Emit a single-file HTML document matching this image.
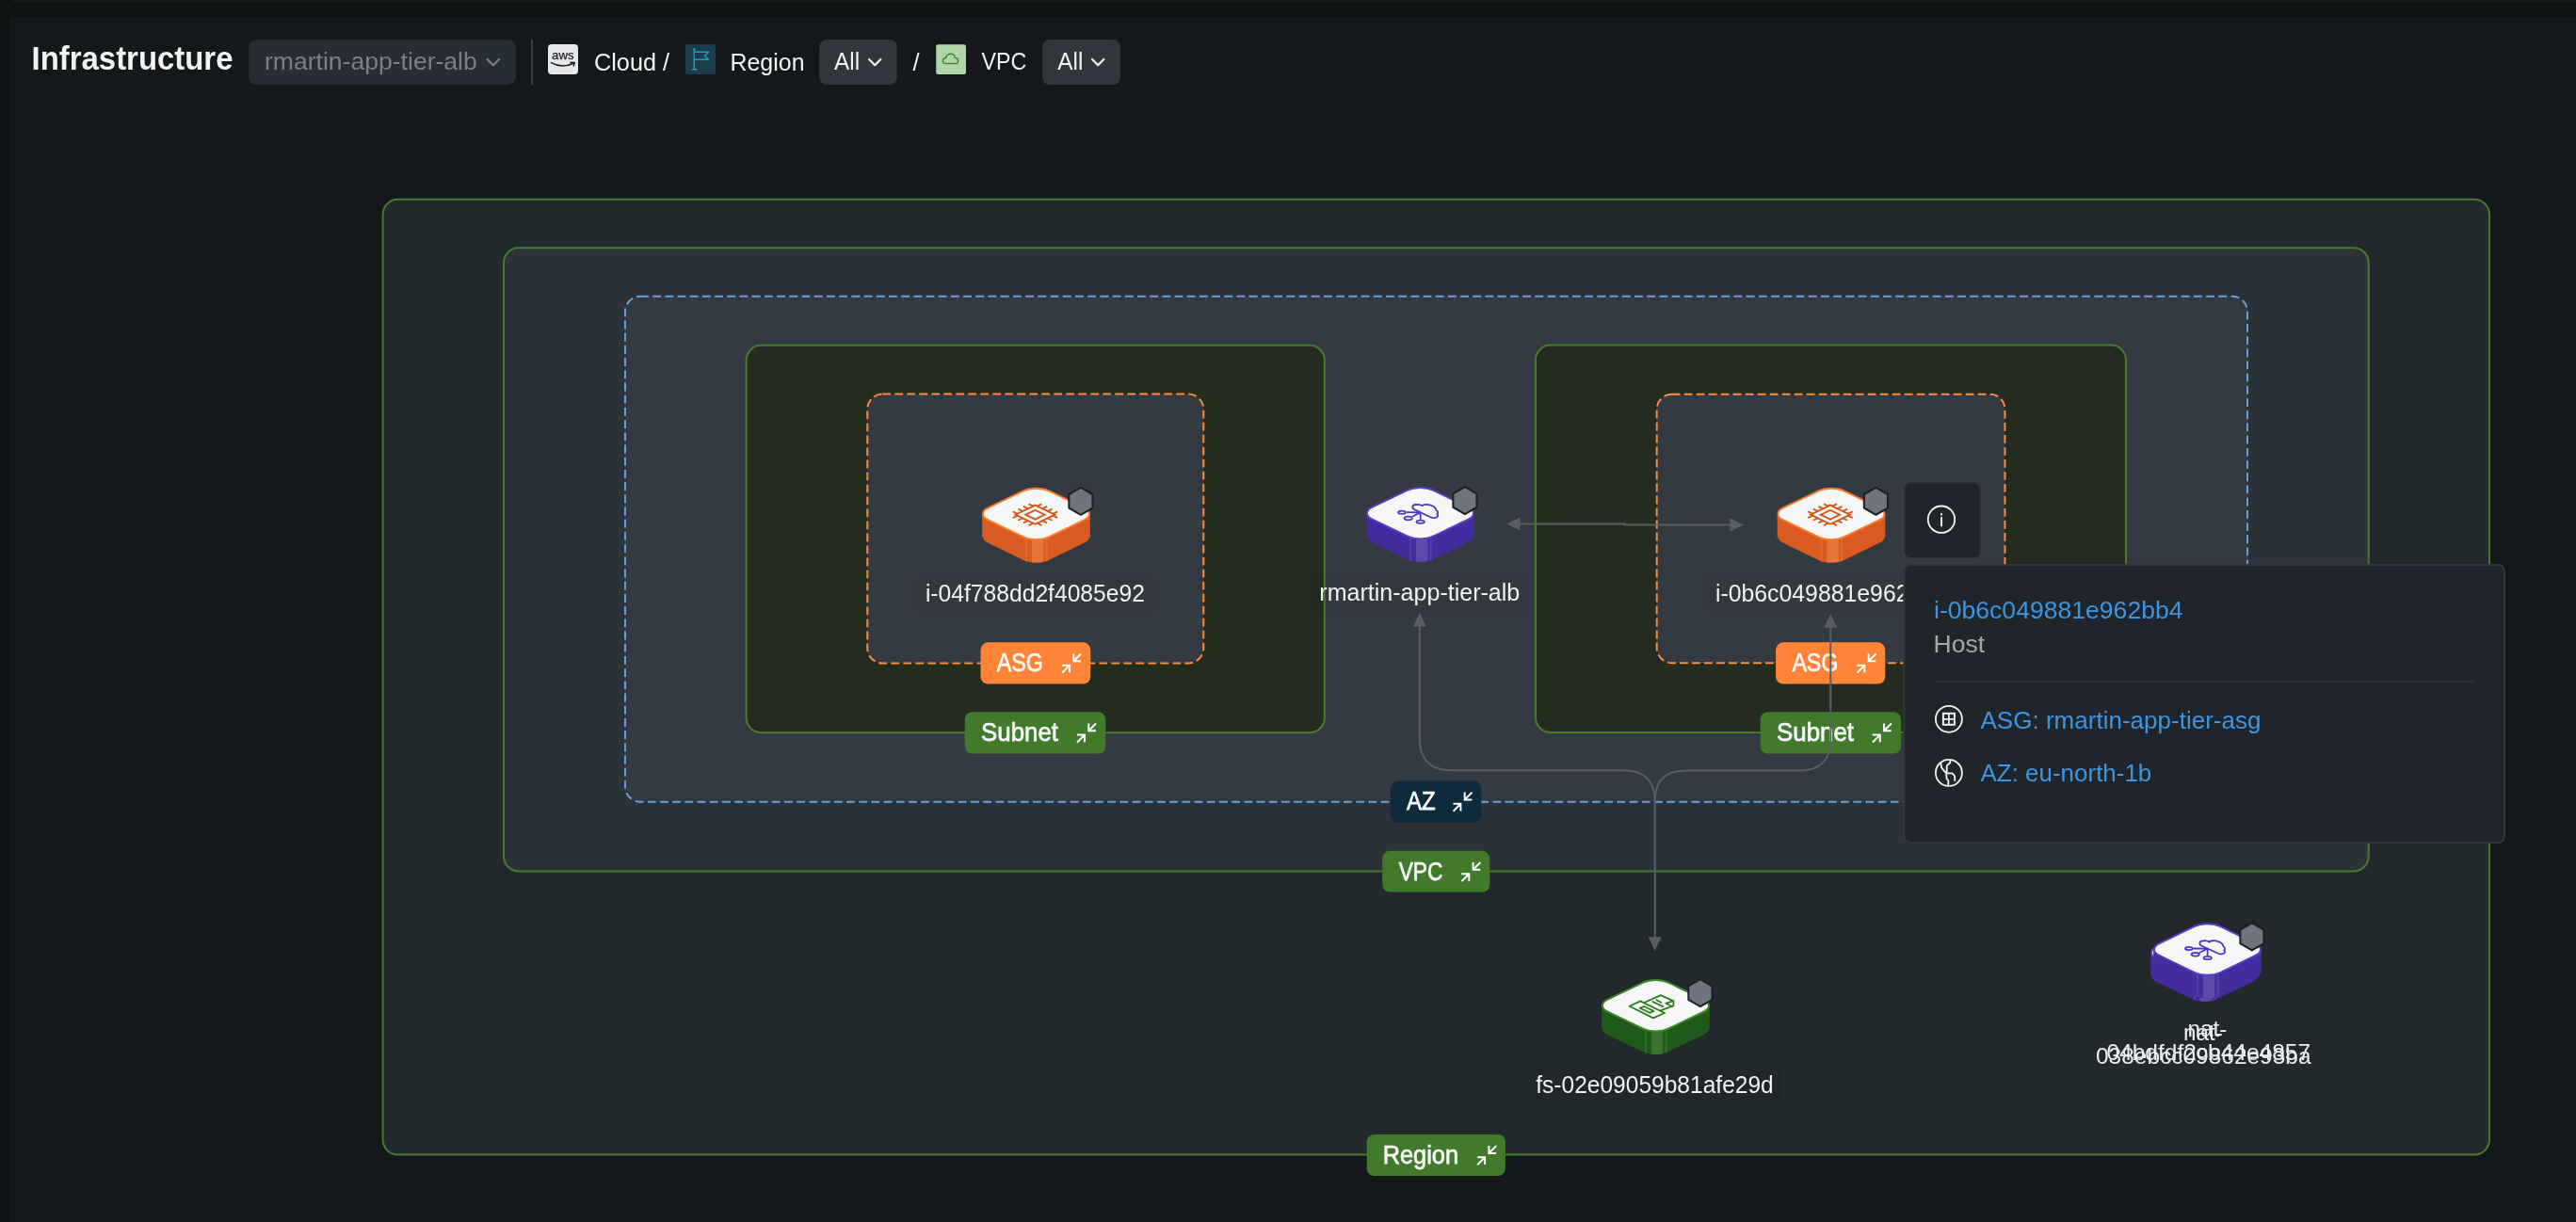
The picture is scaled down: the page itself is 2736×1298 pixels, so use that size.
<!DOCTYPE html><html><head><meta charset="utf-8"><style>html,body{margin:0;padding:0;background:#0f1213;overflow:hidden}svg{display:block;will-change:transform}text{font-family:"Liberation Sans", sans-serif}</style></head><body>
<svg width="2736" height="1298" viewBox="0 0 2736 1298">
<rect x="0" y="0" width="2736" height="1298" fill="#0f1314"/>
<rect x="13" y="0" width="2723" height="2" fill="#151a1d"/>
<rect x="10" y="18" width="2726" height="1280" fill="#14181b"/>
<text x="33.5" y="73.6" font-size="34.5" fill="#f1f2f2" font-weight="bold" text-anchor="start" textLength="214" lengthAdjust="spacingAndGlyphs" >Infrastructure</text>
<rect x="264.2" y="42.2" width="283.7" height="47.5" rx="8" fill="#262d33" stroke="none" stroke-width="0" />
<text x="281" y="73.6" font-size="26" fill="#7a8086" font-weight="normal" text-anchor="start" textLength="225.8" lengthAdjust="spacingAndGlyphs" >rmartin-app-tier-alb</text>
<path d="M517.5,63 L523.8,69.3 L530.1,63" fill="none" stroke="#7a8086" stroke-width="2.2" stroke-linecap="round" stroke-linejoin="round"/>
<rect x="564" y="42" width="2" height="48" fill="#353c42"/>
<rect x="582" y="47" width="32" height="32" rx="4" fill="#e6e8e9" stroke="none" stroke-width="0" />
<text x="597.8" y="63.4" font-size="13.2" fill="#1b1f22" font-weight="normal" text-anchor="middle" textLength="23.4" lengthAdjust="spacingAndGlyphs" stroke="#1b1f22" stroke-width="0.25">aws</text>
<path d="M585.5,66.6 Q597,73 609,67.2" fill="none" stroke="#1b1f22" stroke-width="1.6" stroke-linecap="round"/>
<path d="M606,66.2 L610.4,66.5 L609.2,70" fill="none" stroke="#1b1f22" stroke-width="1.4" stroke-linecap="round" stroke-linejoin="round"/>
<text x="631" y="75" font-size="25.5" fill="#f1f2f2" font-weight="normal" text-anchor="start" textLength="80" lengthAdjust="spacingAndGlyphs" >Cloud /</text>
<rect x="728" y="47" width="32" height="32" fill="#1a3c4b"/>
<path d="M737.3,52.5 L737.3,73.6 M734.8,73.8 L740.3,73.8 M737.3,55.3 L752.8,55.3 L748.3,59.3 L752.8,63.3 L737.3,63.3" fill="none" stroke="#1f9cc4" stroke-width="1.4" stroke-linejoin="round"/>
<circle cx="737.3" cy="52.3" r="1.2" fill="#1f9cc4"/>
<text x="775.5" y="75" font-size="25.5" fill="#f1f2f2" font-weight="normal" text-anchor="start" textLength="79" lengthAdjust="spacingAndGlyphs" >Region</text>
<rect x="870.3" y="42" width="82.5" height="48" rx="8" fill="#30363c" stroke="none" stroke-width="0" />
<text x="886.1" y="74.3" font-size="25" fill="#f1f2f2" font-weight="normal" text-anchor="start" textLength="27.1" lengthAdjust="spacingAndGlyphs" >All</text>
<path d="M923,63 L929.2,69.3 L935.4,63" fill="none" stroke="#f1f2f2" stroke-width="2.2" stroke-linecap="round" stroke-linejoin="round"/>
<text x="969.5" y="75" font-size="25.5" fill="#f1f2f2" font-weight="normal" text-anchor="start" >/</text>
<rect x="994.2" y="47.2" width="31.8" height="31.7" rx="2" fill="#b2d4ab" stroke="none" stroke-width="0" />
<path d="M1004.2,67.6 C1000.5,67.6 1000.5,61.6 1004.6,61.6 C1004.8,57.8 1008.5,56.8 1010.5,57.3 C1013,57.6 1014,59.5 1014.3,61.4 C1018.5,61.2 1018.8,67.6 1014.8,67.6 Z" fill="none" stroke="#3d8b2e" stroke-width="1.5" stroke-linejoin="round"/>
<text x="1042.6" y="74.3" font-size="25" fill="#f1f2f2" font-weight="normal" text-anchor="start" textLength="47.8" lengthAdjust="spacingAndGlyphs" >VPC</text>
<rect x="1107.1" y="42" width="82.9" height="48" rx="8" fill="#30363c" stroke="none" stroke-width="0" />
<text x="1123.3" y="74.3" font-size="25" fill="#f1f2f2" font-weight="normal" text-anchor="start" textLength="27.1" lengthAdjust="spacingAndGlyphs" >All</text>
<path d="M1160,63 L1166.2,69.3 L1172.4,63" fill="none" stroke="#f1f2f2" stroke-width="2.2" stroke-linecap="round" stroke-linejoin="round"/>
<rect x="406.6" y="211.8" width="2237.4" height="1014.8" rx="16" fill="#22292d" stroke="#457c2a" stroke-width="2" />
<rect x="535" y="263.3" width="1980.6999999999998" height="662.2" rx="16" fill="#2b3238" stroke="#457c2a" stroke-width="2" />
<rect x="664" y="314.7" width="1723" height="537.0999999999999" rx="16" fill="#343a41" stroke="#64a0de" stroke-width="2" stroke-dasharray="8.8 4.4"/>
<rect x="792.6" y="366.8" width="614.1999999999999" height="411.40000000000003" rx="16" fill="#232c1f" stroke="#457c2a" stroke-width="2" />
<rect x="1631" y="366.5" width="627" height="411.5" rx="16" fill="#232c1f" stroke="#457c2a" stroke-width="2" />
<rect x="921.3" y="418.6" width="357.0" height="285.9" rx="16" fill="#343a41" stroke="#ff8a3d" stroke-width="2" stroke-dasharray="8.8 4.2"/>
<rect x="1759.7" y="418.7" width="369.79999999999995" height="285.59999999999997" rx="16" fill="#343a41" stroke="#ff8a3d" stroke-width="2" stroke-dasharray="8.8 4.2"/>
<rect x="1041.5" y="682.3" width="116.80000000000004" height="44.300000000000026" rx="8" fill="#ff8438" stroke="none" stroke-width="0" />
<text x="1058.8" y="713.0" font-size="28.5" fill="#f7f7f7" font-weight="normal" text-anchor="start" textLength="49" lengthAdjust="spacingAndGlyphs" stroke="#f7f7f7" stroke-width="0.75">ASG</text>
<path d="M1128.00,706.70 L1136.00,706.70 L1136.00,714.30 M1136.00,706.70 L1128.10,714.60" fill="none" stroke="#fff" stroke-width="2.0" stroke-linecap="butt" stroke-linejoin="miter"/>
<path d="M1140.30,694.50 L1140.30,702.30 L1148.00,702.30 M1140.30,702.30 L1148.10,694.50" fill="none" stroke="#fff" stroke-width="2.0" stroke-linecap="butt" stroke-linejoin="miter"/>
<rect x="1024.7" y="756.1999999999999" width="149.6" height="44.40000000000005" rx="8" fill="#427a2b" stroke="none" stroke-width="0" />
<text x="1042" y="786.9" font-size="28.5" fill="#f7f7f7" font-weight="normal" text-anchor="start" textLength="82" lengthAdjust="spacingAndGlyphs" stroke="#f7f7f7" stroke-width="0.75">Subnet</text>
<path d="M1144.00,780.60 L1152.00,780.60 L1152.00,788.20 M1152.00,780.60 L1144.10,788.50" fill="none" stroke="#fff" stroke-width="2.0" stroke-linecap="butt" stroke-linejoin="miter"/>
<path d="M1156.30,768.40 L1156.30,776.20 L1164.00,776.20 M1156.30,776.20 L1164.10,768.40" fill="none" stroke="#fff" stroke-width="2.0" stroke-linecap="butt" stroke-linejoin="miter"/>
<rect x="1886.1000000000001" y="682.3" width="116.1999999999999" height="44.300000000000026" rx="8" fill="#ff8438" stroke="none" stroke-width="0" />
<text x="1903.4" y="713.0" font-size="28.5" fill="#f7f7f7" font-weight="normal" text-anchor="start" textLength="49" lengthAdjust="spacingAndGlyphs" stroke="#f7f7f7" stroke-width="0.75">ASG</text>
<path d="M1972.40,706.70 L1980.40,706.70 L1980.40,714.30 M1980.40,706.70 L1972.50,714.60" fill="none" stroke="#fff" stroke-width="2.0" stroke-linecap="butt" stroke-linejoin="miter"/>
<path d="M1984.70,694.50 L1984.70,702.30 L1992.40,702.30 M1984.70,702.30 L1992.50,694.50" fill="none" stroke="#fff" stroke-width="2.0" stroke-linecap="butt" stroke-linejoin="miter"/>
<rect x="1869.7" y="756.1999999999999" width="149.39999999999995" height="44.40000000000005" rx="8" fill="#427a2b" stroke="none" stroke-width="0" />
<text x="1887" y="786.9" font-size="28.5" fill="#f7f7f7" font-weight="normal" text-anchor="start" textLength="82" lengthAdjust="spacingAndGlyphs" stroke="#f7f7f7" stroke-width="0.75">Subnet</text>
<path d="M1988.80,780.60 L1996.80,780.60 L1996.80,788.20 M1996.80,780.60 L1988.90,788.50" fill="none" stroke="#fff" stroke-width="2.0" stroke-linecap="butt" stroke-linejoin="miter"/>
<path d="M2001.10,768.40 L2001.10,776.20 L2008.80,776.20 M2001.10,776.20 L2008.90,768.40" fill="none" stroke="#fff" stroke-width="2.0" stroke-linecap="butt" stroke-linejoin="miter"/>
<rect x="1477.1000000000001" y="829.4" width="96.1999999999999" height="44.40000000000005" rx="8" fill="#0e2a3b" stroke="none" stroke-width="0" />
<text x="1494" y="860.1" font-size="28.5" fill="#f7f7f7" font-weight="normal" text-anchor="start" textLength="30.7" lengthAdjust="spacingAndGlyphs" stroke="#f7f7f7" stroke-width="0.75">AZ</text>
<path d="M1543.40,853.80 L1551.40,853.80 L1551.40,861.40 M1551.40,853.80 L1543.50,861.70" fill="none" stroke="#fff" stroke-width="2.0" stroke-linecap="butt" stroke-linejoin="miter"/>
<path d="M1555.70,841.60 L1555.70,849.40 L1563.40,849.40 M1555.70,849.40 L1563.50,841.60" fill="none" stroke="#fff" stroke-width="2.0" stroke-linecap="butt" stroke-linejoin="miter"/>
<rect x="1468.2" y="903.8" width="114.1" height="43.800000000000026" rx="8" fill="#427a2b" stroke="none" stroke-width="0" />
<text x="1485.7" y="934.5" font-size="28.5" fill="#f7f7f7" font-weight="normal" text-anchor="start" textLength="46.8" lengthAdjust="spacingAndGlyphs" stroke="#f7f7f7" stroke-width="0.75">VPC</text>
<path d="M1552.30,928.20 L1560.30,928.20 L1560.30,935.80 M1560.30,928.20 L1552.40,936.10" fill="none" stroke="#fff" stroke-width="2.0" stroke-linecap="butt" stroke-linejoin="miter"/>
<path d="M1564.60,916.00 L1564.60,923.80 L1572.30,923.80 M1564.60,923.80 L1572.40,916.00" fill="none" stroke="#fff" stroke-width="2.0" stroke-linecap="butt" stroke-linejoin="miter"/>
<rect x="1451.7" y="1204.9" width="147.1999999999999" height="44.2" rx="8" fill="#427a2b" stroke="none" stroke-width="0" />
<text x="1468.7" y="1235.6" font-size="28.5" fill="#f7f7f7" font-weight="normal" text-anchor="start" textLength="80.3" lengthAdjust="spacingAndGlyphs" stroke="#f7f7f7" stroke-width="0.75">Region</text>
<path d="M1569.10,1229.30 L1577.10,1229.30 L1577.10,1236.90 M1577.10,1229.30 L1569.20,1237.20" fill="none" stroke="#fff" stroke-width="2.0" stroke-linecap="butt" stroke-linejoin="miter"/>
<path d="M1581.40,1217.10 L1581.40,1224.90 L1589.10,1224.90 M1581.40,1224.90 L1589.20,1217.10" fill="none" stroke="#fff" stroke-width="2.0" stroke-linecap="butt" stroke-linejoin="miter"/>
<path d="M1612,556.6 L1726,556.6 L1726,557.6 L1840,557.6" fill="none" stroke="#585e65" stroke-width="2"/>
<polygon points="1600,556.6 1614.50,549.60 1614.50,563.60" fill="#585e65"/>
<polygon points="1852,557.6 1837.50,564.60 1837.50,550.60" fill="#585e65"/>
<path d="M1507.8,662 L1507.8,784 Q1507.8,818.2 1541.5,818.2 L1724,818.2 Q1757.7,818.2 1757.7,851 L1757.7,998" fill="none" stroke="#585e65" stroke-width="2"/>
<path d="M1944.3,662 L1944.3,786 Q1944.3,818.5 1911,818.5 L1791,818.5 Q1757.7,818.5 1757.7,851" fill="none" stroke="#585e65" stroke-width="2"/>
<polygon points="1507.8,651 1514.80,665.50 1500.80,665.50" fill="#585e65"/>
<polygon points="1944.3,652 1951.30,666.50 1937.30,666.50" fill="#585e65"/>
<polygon points="1757.7,1009.7 1750.70,995.20 1764.70,995.20" fill="#585e65"/>
<g>
<rect x="-45.5" y="-45.5" width="91.0" height="91.0" rx="19.0" fill="#d95b20" transform="translate(1100.5,570.4) scale(1,0.4817) rotate(45)"/>
<rect x="1043.2" y="545.9" width="114.6" height="24.5" fill="#d95b20"/>
<clipPath id="cp1"><rect x="-45.5" y="-45.5" width="91.0" height="91.0" rx="19.0" transform="translate(1100.5,570.4) scale(1,0.4817) rotate(45)"/><rect x="1043.2" y="545.9" width="114.6" height="24.5"/></clipPath>
<g clip-path="url(#cp1)">
<rect x="1095.9" y="545.9" width="12.4" height="56.1" fill="#e27538"/>
<rect x="1089.1" y="545.9" width="1.8" height="56.1" fill="#e27538" opacity="0.7"/>
<rect x="1110.5" y="545.9" width="2.2" height="56.1" fill="#e27538" opacity="0.7"/>
</g>
<rect x="-45.5" y="-45.5" width="91.0" height="91.0" rx="19.0" fill="#f6f7f7" stroke="#ff7b2c" stroke-width="1.9" vector-effect="non-scaling-stroke" transform="translate(1100.5,545.9) scale(1,0.4817) rotate(45)"/>
<g transform="translate(1099.5,546.6999999999999) scale(1,0.4817) rotate(45)"><rect x="-14.8" y="-14.8" width="29.6" height="29.6" fill="none" stroke="#d35a1f" stroke-width="1.9" vector-effect="non-scaling-stroke"/><rect x="-7.2" y="-7.2" width="14.4" height="14.4" fill="none" stroke="#d35a1f" stroke-width="1.9" vector-effect="non-scaling-stroke"/><path d="M-11.84,-13.9 L-11.84,-21.700000000000003 M-11.84,13.9 L-11.84,21.700000000000003 M-13.9,-11.84 L-21.700000000000003,-11.84 M13.9,-11.84 L21.700000000000003,-11.84 M-3.95,-13.9 L-3.95,-21.700000000000003 M-3.95,13.9 L-3.95,21.700000000000003 M-13.9,-3.95 L-21.700000000000003,-3.95 M13.9,-3.95 L21.700000000000003,-3.95 M3.95,-13.9 L3.95,-21.700000000000003 M3.95,13.9 L3.95,21.700000000000003 M-13.9,3.95 L-21.700000000000003,3.95 M13.9,3.95 L21.700000000000003,3.95 M11.84,-13.9 L11.84,-21.700000000000003 M11.84,13.9 L11.84,21.700000000000003 M-13.9,11.84 L-21.700000000000003,11.84 M13.9,11.84 L21.700000000000003,11.84" fill="none" stroke="#d35a1f" stroke-width="1.9" vector-effect="non-scaling-stroke"/></g>
<polygon points="1147.90,517.80 1160.46,525.05 1160.46,539.55 1147.90,546.80 1135.34,539.55 1135.34,525.05" fill="#6e757d" stroke="#1a1f23" stroke-width="2.0" stroke-linejoin="round"/>
</g>
<rect x="973.9" y="610.8" width="251.0" height="40" rx="6" fill="#000" opacity="0.03"/>
<text x="982.9000000000001" y="638.8" font-size="25.5" fill="#f0f1f1" font-weight="normal" text-anchor="start" textLength="233" lengthAdjust="spacingAndGlyphs" >i-04f788dd2f4085e92</text>
<g>
<rect x="-45.5" y="-45.5" width="91.0" height="91.0" rx="19.0" fill="#432c9c" transform="translate(1508.5,569.7) scale(1,0.4817) rotate(45)"/>
<rect x="1451.2" y="545.2" width="114.6" height="24.5" fill="#432c9c"/>
<clipPath id="cp2"><rect x="-45.5" y="-45.5" width="91.0" height="91.0" rx="19.0" transform="translate(1508.5,569.7) scale(1,0.4817) rotate(45)"/><rect x="1451.2" y="545.2" width="114.6" height="24.5"/></clipPath>
<g clip-path="url(#cp2)">
<rect x="1503.9" y="545.2" width="12.4" height="56.1" fill="#5d49aa"/>
<rect x="1497.1" y="545.2" width="1.8" height="56.1" fill="#5d49aa" opacity="0.7"/>
<rect x="1518.5" y="545.2" width="2.2" height="56.1" fill="#5d49aa" opacity="0.7"/>
</g>
<rect x="-45.5" y="-45.5" width="91.0" height="91.0" rx="19.0" fill="#f6f7f7" stroke="#5b3cc8" stroke-width="1.9" vector-effect="non-scaling-stroke" transform="translate(1508.5,545.2) scale(1,0.4817) rotate(45)"/>
<g transform="translate(1508.5,545.2)"><path d="M-4.9,-3.3 C-9.5,-5 -9,-9 -5,-9.2 C-2,-9.6 0.5,-9.2 1.9,-7.8 C3.5,-9.6 8,-9.6 10.8,-8.6 C14,-7.6 16.5,-6 16.8,-3.5 C19,-2.5 19,0 17.8,0.8 C19.5,2 18.5,4.5 16,4.7 C14.5,5 12.5,5 11.3,4.3 Z" fill="none" stroke="#5034c0" stroke-width="1.8" stroke-linejoin="round"/><path d="M0.1,-0.8 L-14.9,-1 M0.1,-0.8 L-8.6,3.5 M0.1,-0.8 L0.2,6.6" fill="none" stroke="#5034c0" stroke-width="1.8"/><ellipse cx="-19.6" cy="-1.0" rx="3.9" ry="1.6" fill="none" stroke="#5034c0" stroke-width="1.8"/><ellipse cx="-12.8" cy="5.3" rx="4.1" ry="1.8" fill="none" stroke="#5034c0" stroke-width="1.8"/><ellipse cx="0.2" cy="9.0" rx="4.2" ry="1.6" fill="none" stroke="#5034c0" stroke-width="1.8"/></g>
<polygon points="1555.90,517.10 1568.46,524.35 1568.46,538.85 1555.90,546.10 1543.34,538.85 1543.34,524.35" fill="#6e757d" stroke="#1a1f23" stroke-width="2.0" stroke-linejoin="round"/>
</g>
<rect x="1392.3" y="609.8" width="231.0" height="40" rx="6" fill="#000" opacity="0.03"/>
<text x="1401.3" y="637.8" font-size="25.5" fill="#f0f1f1" font-weight="normal" text-anchor="start" textLength="213" lengthAdjust="spacingAndGlyphs" >rmartin-app-tier-alb</text>
<g>
<rect x="-45.5" y="-45.5" width="91.0" height="91.0" rx="19.0" fill="#d95b20" transform="translate(1945,570.4) scale(1,0.4817) rotate(45)"/>
<rect x="1887.7" y="545.9" width="114.6" height="24.5" fill="#d95b20"/>
<clipPath id="cp3"><rect x="-45.5" y="-45.5" width="91.0" height="91.0" rx="19.0" transform="translate(1945,570.4) scale(1,0.4817) rotate(45)"/><rect x="1887.7" y="545.9" width="114.6" height="24.5"/></clipPath>
<g clip-path="url(#cp3)">
<rect x="1940.4" y="545.9" width="12.4" height="56.1" fill="#e27538"/>
<rect x="1933.6" y="545.9" width="1.8" height="56.1" fill="#e27538" opacity="0.7"/>
<rect x="1955.0" y="545.9" width="2.2" height="56.1" fill="#e27538" opacity="0.7"/>
</g>
<rect x="-45.5" y="-45.5" width="91.0" height="91.0" rx="19.0" fill="#f6f7f7" stroke="#ff7b2c" stroke-width="1.9" vector-effect="non-scaling-stroke" transform="translate(1945,545.9) scale(1,0.4817) rotate(45)"/>
<g transform="translate(1944.0,546.6999999999999) scale(1,0.4817) rotate(45)"><rect x="-14.8" y="-14.8" width="29.6" height="29.6" fill="none" stroke="#d35a1f" stroke-width="1.9" vector-effect="non-scaling-stroke"/><rect x="-7.2" y="-7.2" width="14.4" height="14.4" fill="none" stroke="#d35a1f" stroke-width="1.9" vector-effect="non-scaling-stroke"/><path d="M-11.84,-13.9 L-11.84,-21.700000000000003 M-11.84,13.9 L-11.84,21.700000000000003 M-13.9,-11.84 L-21.700000000000003,-11.84 M13.9,-11.84 L21.700000000000003,-11.84 M-3.95,-13.9 L-3.95,-21.700000000000003 M-3.95,13.9 L-3.95,21.700000000000003 M-13.9,-3.95 L-21.700000000000003,-3.95 M13.9,-3.95 L21.700000000000003,-3.95 M3.95,-13.9 L3.95,-21.700000000000003 M3.95,13.9 L3.95,21.700000000000003 M-13.9,3.95 L-21.700000000000003,3.95 M13.9,3.95 L21.700000000000003,3.95 M11.84,-13.9 L11.84,-21.700000000000003 M11.84,13.9 L11.84,21.700000000000003 M-13.9,11.84 L-21.700000000000003,11.84 M13.9,11.84 L21.700000000000003,11.84" fill="none" stroke="#d35a1f" stroke-width="1.9" vector-effect="non-scaling-stroke"/></g>
<polygon points="1992.40,517.80 2004.96,525.05 2004.96,539.55 1992.40,546.80 1979.84,539.55 1979.84,525.05" fill="#6e757d" stroke="#1a1f23" stroke-width="2.0" stroke-linejoin="round"/>
</g>
<rect x="1812.9" y="610.8" width="265.0" height="40" rx="6" fill="#000" opacity="0.03"/>
<text x="1821.9" y="638.8" font-size="25.5" fill="#f0f1f1" font-weight="normal" text-anchor="start" textLength="247" lengthAdjust="spacingAndGlyphs" >i-0b6c049881e962bb4</text>
<g>
<rect x="-45.5" y="-45.5" width="91.0" height="91.0" rx="19.0" fill="#205a1a" transform="translate(1758.5,1092.7) scale(1,0.4817) rotate(45)"/>
<rect x="1701.2" y="1068.2" width="114.6" height="24.5" fill="#205a1a"/>
<clipPath id="cp4"><rect x="-45.5" y="-45.5" width="91.0" height="91.0" rx="19.0" transform="translate(1758.5,1092.7) scale(1,0.4817) rotate(45)"/><rect x="1701.2" y="1068.2" width="114.6" height="24.5"/></clipPath>
<g clip-path="url(#cp4)">
<rect x="1753.9" y="1068.2" width="12.4" height="56.1" fill="#3a7030"/>
<rect x="1747.1" y="1068.2" width="1.8" height="56.1" fill="#3a7030" opacity="0.7"/>
<rect x="1768.5" y="1068.2" width="2.2" height="56.1" fill="#3a7030" opacity="0.7"/>
</g>
<rect x="-45.5" y="-45.5" width="91.0" height="91.0" rx="19.0" fill="#f6f7f7" stroke="#3d8a2c" stroke-width="1.9" vector-effect="non-scaling-stroke" transform="translate(1758.5,1068.2) scale(1,0.4817) rotate(45)"/>
<g transform="translate(1758.5,1068.2)" fill="none" stroke="#2d7a1f" stroke-width="1.8" stroke-linejoin="round" stroke-linecap="round"><path d="M-11.7,-3.4 L5.5,-11.1 L18.9,-4.8 L18.9,0.1 L5.2,5.2"/><path d="M18.9,-4.8 L10.9,-2.5 L16.5,0.3"/><path d="M-3.1,-4.2 L7.8,0.9 M0.9,-6.0 L5.8,-3.5"/><path d="M-27.8,0.6 L-16.3,-4.8 L9.5,7.8 L-2.5,13.2 Z"/><path d="M-16.9,2.6 L-12.4,0.8 L-1.9,5.8 L-6.4,7.6 Z"/></g>
<polygon points="1805.90,1040.10 1818.46,1047.35 1818.46,1061.85 1805.90,1069.10 1793.34,1061.85 1793.34,1047.35" fill="#6e757d" stroke="#1a1f23" stroke-width="2.0" stroke-linejoin="round"/>
</g>
<rect x="1622.2" y="1133.2" width="270.5" height="40" rx="6" fill="#000" opacity="0.03"/>
<text x="1631.25" y="1161.2" font-size="25.5" fill="#f0f1f1" font-weight="normal" text-anchor="start" textLength="252.5" lengthAdjust="spacingAndGlyphs" >fs-02e09059b81afe29d</text>
<g>
<rect x="-45.5" y="-45.5" width="91.0" height="91.0" rx="19.0" fill="#432c9c" transform="translate(2341.5,1036.5) scale(1,0.4817) rotate(45)"/>
<rect x="2284.2" y="1012.0" width="114.6" height="24.5" fill="#432c9c"/>
<clipPath id="cp5"><rect x="-45.5" y="-45.5" width="91.0" height="91.0" rx="19.0" transform="translate(2341.5,1036.5) scale(1,0.4817) rotate(45)"/><rect x="2284.2" y="1012.0" width="114.6" height="24.5"/></clipPath>
<g clip-path="url(#cp5)">
<rect x="2336.9" y="1012.0" width="12.4" height="56.1" fill="#5d49aa"/>
<rect x="2330.1" y="1012.0" width="1.8" height="56.1" fill="#5d49aa" opacity="0.7"/>
<rect x="2351.5" y="1012.0" width="2.2" height="56.1" fill="#5d49aa" opacity="0.7"/>
</g>
<rect x="-45.5" y="-45.5" width="91.0" height="91.0" rx="19.0" fill="#f6f7f7" stroke="#5b3cc8" stroke-width="1.9" vector-effect="non-scaling-stroke" transform="translate(2341.5,1012.0) scale(1,0.4817) rotate(45)"/>
<g transform="translate(2341.5,1012.0)"><path d="M-4.9,-3.3 C-9.5,-5 -9,-9 -5,-9.2 C-2,-9.6 0.5,-9.2 1.9,-7.8 C3.5,-9.6 8,-9.6 10.8,-8.6 C14,-7.6 16.5,-6 16.8,-3.5 C19,-2.5 19,0 17.8,0.8 C19.5,2 18.5,4.5 16,4.7 C14.5,5 12.5,5 11.3,4.3 Z" fill="none" stroke="#5034c0" stroke-width="1.8" stroke-linejoin="round"/><path d="M0.1,-0.8 L-14.9,-1 M0.1,-0.8 L-8.6,3.5 M0.1,-0.8 L0.2,6.6" fill="none" stroke="#5034c0" stroke-width="1.8"/><ellipse cx="-19.6" cy="-1.0" rx="3.9" ry="1.6" fill="none" stroke="#5034c0" stroke-width="1.8"/><ellipse cx="-12.8" cy="5.3" rx="4.1" ry="1.8" fill="none" stroke="#5034c0" stroke-width="1.8"/><ellipse cx="0.2" cy="9.0" rx="4.2" ry="1.6" fill="none" stroke="#5034c0" stroke-width="1.8"/></g>
</g>
<g>
<rect x="-45.5" y="-45.5" width="91.0" height="91.0" rx="19.0" fill="#432c9c" transform="translate(2344.5,1033.0) scale(1,0.4817) rotate(45)"/>
<rect x="2287.2" y="1008.5" width="114.6" height="24.5" fill="#432c9c"/>
<clipPath id="cp6"><rect x="-45.5" y="-45.5" width="91.0" height="91.0" rx="19.0" transform="translate(2344.5,1033.0) scale(1,0.4817) rotate(45)"/><rect x="2287.2" y="1008.5" width="114.6" height="24.5"/></clipPath>
<g clip-path="url(#cp6)">
<rect x="2339.9" y="1008.5" width="12.4" height="56.1" fill="#5d49aa"/>
<rect x="2333.1" y="1008.5" width="1.8" height="56.1" fill="#5d49aa" opacity="0.7"/>
<rect x="2354.5" y="1008.5" width="2.2" height="56.1" fill="#5d49aa" opacity="0.7"/>
</g>
<rect x="-45.5" y="-45.5" width="91.0" height="91.0" rx="19.0" fill="#f6f7f7" stroke="#5b3cc8" stroke-width="1.9" vector-effect="non-scaling-stroke" transform="translate(2344.5,1008.5) scale(1,0.4817) rotate(45)"/>
<g transform="translate(2344.5,1008.5)"><path d="M-4.9,-3.3 C-9.5,-5 -9,-9 -5,-9.2 C-2,-9.6 0.5,-9.2 1.9,-7.8 C3.5,-9.6 8,-9.6 10.8,-8.6 C14,-7.6 16.5,-6 16.8,-3.5 C19,-2.5 19,0 17.8,0.8 C19.5,2 18.5,4.5 16,4.7 C14.5,5 12.5,5 11.3,4.3 Z" fill="none" stroke="#5034c0" stroke-width="1.8" stroke-linejoin="round"/><path d="M0.1,-0.8 L-14.9,-1 M0.1,-0.8 L-8.6,3.5 M0.1,-0.8 L0.2,6.6" fill="none" stroke="#5034c0" stroke-width="1.8"/><ellipse cx="-19.6" cy="-1.0" rx="3.9" ry="1.6" fill="none" stroke="#5034c0" stroke-width="1.8"/><ellipse cx="-12.8" cy="5.3" rx="4.1" ry="1.8" fill="none" stroke="#5034c0" stroke-width="1.8"/><ellipse cx="0.2" cy="9.0" rx="4.2" ry="1.6" fill="none" stroke="#5034c0" stroke-width="1.8"/></g>
<polygon points="2391.90,980.40 2404.46,987.65 2404.46,1002.15 2391.90,1009.40 2379.34,1002.15 2379.34,987.65" fill="#6e757d" stroke="#1a1f23" stroke-width="2.0" stroke-linejoin="round"/>
</g>
<text x="2319" y="1104.8" font-size="24" fill="#eceded" font-weight="normal" text-anchor="start" textLength="41.8" lengthAdjust="spacingAndGlyphs" >nat-</text>
<text x="2226" y="1129.5" font-size="24" fill="#eceded" font-weight="normal" text-anchor="start" textLength="228.5" lengthAdjust="spacingAndGlyphs" >038ebcc09862e93ba</text>
<text x="2323.5" y="1100.8" font-size="24" fill="#eceded" font-weight="normal" text-anchor="start" textLength="41.8" lengthAdjust="spacingAndGlyphs" >nat-</text>
<text x="2237.5" y="1125.5" font-size="24" fill="#eceded" font-weight="normal" text-anchor="start" textLength="216.5" lengthAdjust="spacingAndGlyphs" >04bdfdf2cb44e4857</text>
<rect x="2023" y="513" width="80" height="79.5" rx="6" fill="#1f252a" stroke="#2a3036" stroke-width="1" />
<circle cx="2062" cy="551.7" r="14.2" fill="none" stroke="#f1f2f2" stroke-width="1.8"/>
<rect x="2061.1" y="549" width="1.9" height="10.2" fill="#f1f2f2"/>
<rect x="2061.1" y="545.1" width="1.9" height="2.3" fill="#f1f2f2"/>
<rect x="2022.3" y="600" width="637.7" height="295" rx="7" fill="#1f252b" stroke="#30373d" stroke-width="2" />
<text x="2054" y="656.6" font-size="25.5" fill="#3d95e2" font-weight="normal" text-anchor="start" textLength="264.5" lengthAdjust="spacingAndGlyphs" >i-0b6c049881e962bb4</text>
<text x="2053.5" y="693.4" font-size="25.5" fill="#a3a7ab" font-weight="normal" text-anchor="start" textLength="54.5" lengthAdjust="spacingAndGlyphs" >Host</text>
<rect x="2055" y="723" width="572" height="1.6" fill="#2e353b" transform="translate(0,0)"/>
<circle cx="2069.9" cy="763.8" r="14" fill="none" stroke="#f1f2f2" stroke-width="1.8"/>
<rect x="2063.9" y="757.8" width="12" height="12" fill="none" stroke="#f1f2f2" stroke-width="2"/>
<path d="M2069.9,757.8 L2069.9,769.8 M2063.9,763.8 L2075.9,763.8" stroke="#f1f2f2" stroke-width="1.8"/>
<text x="2103.5" y="774.3" font-size="25.5" fill="#3d95e2" font-weight="normal" text-anchor="start" textLength="298" lengthAdjust="spacingAndGlyphs" >ASG: rmartin-app-tier-asg</text>
<circle cx="2069.9" cy="820.9" r="14" fill="none" stroke="#f1f2f2" stroke-width="1.8"/>
<path d="M2061.4,809.5 L2062,815.3 L2067.2,821.3 L2067.5,826.8 L2069.3,829.3 L2069.3,835 M2071.5,807.3 L2071.3,810 L2067.7,813.3 L2067.7,821.3 L2073.5,821.3 L2076.2,824.4 L2076.2,829.8" fill="none" stroke="#f1f2f2" stroke-width="1.8" stroke-linejoin="round"/>
<text x="2103.5" y="830" font-size="25.5" fill="#3d95e2" font-weight="normal" text-anchor="start" textLength="181.8" lengthAdjust="spacingAndGlyphs" >AZ: eu-north-1b</text>
</svg></body></html>
